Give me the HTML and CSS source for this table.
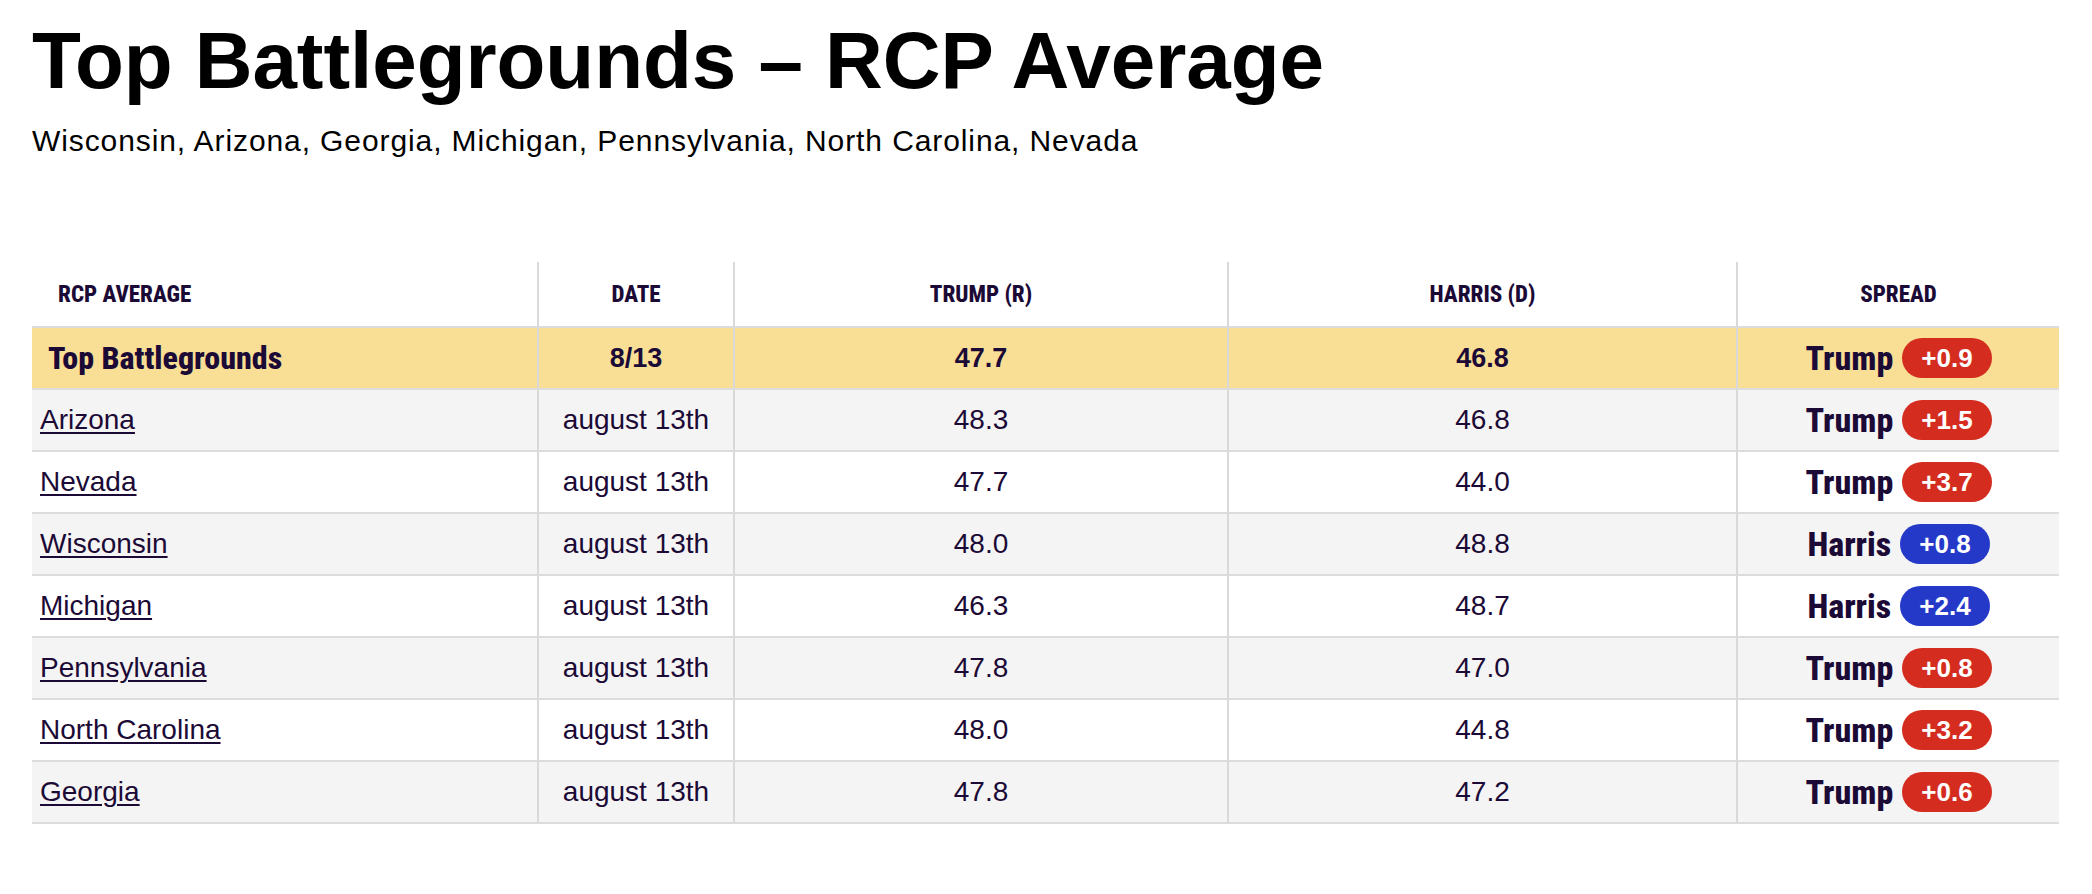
FILE: index.html
```html
<!DOCTYPE html>
<html lang="en">
<head>
<meta charset="utf-8">
<title>Top Battlegrounds – RCP Average</title>
<link rel="stylesheet" href="styles.css">
</head>
<body>
<main class="page">
  <header class="page-head">
    <h1 class="title">Top Battlegrounds – RCP Average</h1>
    <p class="subtitle">Wisconsin, Arizona, Georgia, Michigan, Pennsylvania, North Carolina, Nevada</p>
  </header>

  <table class="polls">
    <colgroup>
      <col class="c-name">
      <col class="c-date">
      <col class="c-trump">
      <col class="c-harris">
      <col class="c-spread">
    </colgroup>
    <thead>
      <tr>
        <th class="th-name">RCP AVERAGE</th>
        <th>DATE</th>
        <th>TRUMP (R)</th>
        <th>HARRIS (D)</th>
        <th>SPREAD</th>
      </tr>
    </thead>
    <tbody>
      <tr class="avg">
        <td class="name">Top Battlegrounds</td>
        <td>8/13</td>
        <td>47.7</td>
        <td>46.8</td>
        <td><span class="spread"><span class="who">Trump</span><span class="pill red">+0.9</span></span></td>
      </tr>
      <tr class="alt">
        <td class="name"><a href="#">Arizona</a></td>
        <td>august 13th</td>
        <td>48.3</td>
        <td>46.8</td>
        <td><span class="spread"><span class="who">Trump</span><span class="pill red">+1.5</span></span></td>
      </tr>
      <tr>
        <td class="name"><a href="#">Nevada</a></td>
        <td>august 13th</td>
        <td>47.7</td>
        <td>44.0</td>
        <td><span class="spread"><span class="who">Trump</span><span class="pill red">+3.7</span></span></td>
      </tr>
      <tr class="alt">
        <td class="name"><a href="#">Wisconsin</a></td>
        <td>august 13th</td>
        <td>48.0</td>
        <td>48.8</td>
        <td><span class="spread"><span class="who">Harris</span><span class="pill blue">+0.8</span></span></td>
      </tr>
      <tr>
        <td class="name"><a href="#">Michigan</a></td>
        <td>august 13th</td>
        <td>46.3</td>
        <td>48.7</td>
        <td><span class="spread"><span class="who">Harris</span><span class="pill blue">+2.4</span></span></td>
      </tr>
      <tr class="alt">
        <td class="name"><a href="#">Pennsylvania</a></td>
        <td>august 13th</td>
        <td>47.8</td>
        <td>47.0</td>
        <td><span class="spread"><span class="who">Trump</span><span class="pill red">+0.8</span></span></td>
      </tr>
      <tr>
        <td class="name"><a href="#">North Carolina</a></td>
        <td>august 13th</td>
        <td>48.0</td>
        <td>44.8</td>
        <td><span class="spread"><span class="who">Trump</span><span class="pill red">+3.2</span></span></td>
      </tr>
      <tr class="alt">
        <td class="name"><a href="#">Georgia</a></td>
        <td>august 13th</td>
        <td>47.8</td>
        <td>47.2</td>
        <td><span class="spread"><span class="who">Trump</span><span class="pill red">+0.6</span></span></td>
      </tr>
    </tbody>
  </table>
</main>
</body>
</html>
```

FILE: styles.css
```css
html, body {
  margin: 0;
  padding: 0;
  background: #ffffff;
}

body {
  font-family: "Liberation Sans", Arial, Helvetica, sans-serif;
  color: #000;
}

.page {
  padding: 22px 32px 40px 32px;
}

.page-head {
  display: flex;
  flex-direction: column;
}

.title {
  margin: 0;
  font-size: 80px;
  line-height: 78px;
  font-weight: 700;
  letter-spacing: -0.05px;
  color: #000;
}

.subtitle {
  margin: 24px 0 0 0;
  font-size: 30px;
  line-height: 34px;
  letter-spacing: 0.9px;
  color: #000;
}

.polls {
  margin-top: 104px;
  width: 2027px;
  table-layout: fixed;
  border-collapse: separate;
  border-spacing: 0;
  color: #1c0a36;
}

.c-name { width: 507px; }
.c-date { width: 196px; }
.c-trump { width: 494px; }
.c-harris { width: 509px; }
.c-spread { width: 321px; }

.polls th,
.polls td {
  padding: 0;
  text-align: center;
  vertical-align: middle;
  border-bottom: 2px solid #dcdcdc;
  border-right: 2px solid #d9d9d9;
}

.polls th:last-child,
.polls td:last-child {
  border-right: none;
}

.polls th {
  height: 64px;
  font-family: "Roboto", sans-serif;
  font-stretch: 75%;
  font-weight: 800;
  font-size: 23px;
}

.polls th.th-name {
  text-align: left;
  padding-left: 26px;
}

.polls td {
  height: 60px;
  font-size: 28px;
  font-weight: 400;
}

.polls tr.alt td {
  background: #f4f4f4;
}

.polls tr.avg td {
  background: #f9de95;
  font-weight: 700;
  font-size: 27px;
}

.polls td.name {
  text-align: left;
  padding-left: 8px;
}

.polls tr.avg td.name {
  padding-left: 16px;
  font-family: "Roboto", sans-serif;
  font-stretch: 75%;
  font-weight: 800;
  font-size: 32px;
}

.polls td.name a {
  color: #1c0a36;
  text-decoration: underline;
  text-decoration-thickness: 2px;
  text-underline-offset: 3px;
}

.spread {
  display: inline-flex;
  align-items: center;
  gap: 9px;
}

.who {
  font-family: "Roboto", sans-serif;
  font-stretch: 75%;
  font-weight: 800;
  font-size: 34px;
  color: #1c0a36;
}

.pill {
  display: inline-flex;
  align-items: center;
  justify-content: center;
  height: 40px;
  padding: 0 19px;
  border-radius: 20px;
  color: #ffffff;
  font-family: "Liberation Sans", Arial, sans-serif;
  font-weight: 700;
  font-size: 26px;
}

.pill.red {
  background: #d42d1f;
}

.pill.blue {
  background: #2539c9;
}
```
